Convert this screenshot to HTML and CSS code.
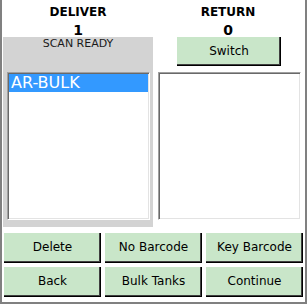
FILE: index.html
```html
<!DOCTYPE html>
<html lang="en">
<head>
    <meta charset="UTF-8">
    <title>Deliver / Return</title>
    <link rel="stylesheet" href="styles.css">
</head>
<body>
    <div class="window">
        <div class="top">
            <div class="column">
                <div class="head">
                    <div class="label">DELIVER</div>
                    <div class="count">1</div>
                </div>
                <div class="panel">
                    <div class="status">SCAN READY</div>
                    <ul class="listbox">
                        <li class="selected">AR-BULK</li>
                    </ul>
                </div>
            </div>
            <div class="column right">
                <div class="head">
                    <div class="label">RETURN</div>
                    <div class="count">0</div>
                </div>
                <button class="btn switch">Switch</button>
                <ul class="listbox"></ul>
            </div>
        </div>
        <div class="actions">
            <button class="btn">Delete</button>
            <button class="btn">No Barcode</button>
            <button class="btn">Key Barcode</button>
            <button class="btn">Back</button>
            <button class="btn">Bulk Tanks</button>
            <button class="btn">Continue</button>
        </div>
    </div>
</body>
</html>
```

FILE: styles.css
```css
body {
    margin: 0;
    background: #ffffff;
    font-family: 'DejaVu Sans', sans-serif;
    color: #000000;
}

.window {
    box-sizing: border-box;
    width: 307px;
    height: 304px;
    border-left: 2px solid #808080;
    border-right: 2px solid #808080;
    border-bottom: 2px solid #808080;
    padding: 0 2px 0 1px;
    background: #ffffff;
}

.top {
    display: grid;
    grid-template-columns: 150px 150px;
}

.head {
    height: 37px;
    box-sizing: border-box;
    padding-top: 4px;
    text-align: center;
    font-weight: bold;
}

.head .label {
    font-size: 12px;
    line-height: 16px;
}

.head .count {
    font-size: 14px;
    line-height: 16px;
    margin-top: 2px;
}

.panel {
    height: 190px;
    box-sizing: border-box;
    background: #d3d3d3;
    padding: 0 4px;
}

.status {
    font-size: 11px;
    line-height: 13px;
    text-align: center;
    color: #1a1a1a;
    margin-bottom: 22px;
}

.listbox {
    list-style: none;
    margin: 0;
    padding: 0;
    width: 143px;
    height: 148px;
    box-sizing: border-box;
    background: #ffffff;
    border-top: 1px solid #a0a0a0;
    border-left: 1px solid #a0a0a0;
    border-right: 1px solid #ffffff;
    border-bottom: 1px solid #ffffff;
    box-shadow: inset 1px 1px 0 #696969, inset -1px -1px 0 #e3e3e3;
    padding: 1px;
}

.listbox li {
    font-size: 16px;
    line-height: 18px;
    padding-left: 2px;
}

.listbox li.selected {
    background: #3399ff;
    color: #ffffff;
}

.right {
    display: flex;
    flex-direction: column;
}

.right .listbox {
    margin: 6px 0 0 5px;
}

.btn {
    font-family: 'DejaVu Sans', sans-serif;
    font-size: 11px;
    color: #000000;
    background: #c9e6c9;
    border: none;
    border-radius: 0;
    box-shadow: inset -1px -1px 0 #000000, inset -2px -2px 0 #404040;
    padding: 0 0 2px 0;
    cursor: pointer;
}

.switch {
    width: 104px;
    height: 29px;
    margin-left: 24px;
    font-size: 12px;
}

.actions {
    display: grid;
    grid-template-columns: 1fr 1fr 1fr;
    grid-template-rows: 30px 30px;
    gap: 4px;
    margin-top: 6px;
    padding: 0 0 0 1px;
}

.actions .btn {
    font-size: 12px;
}
```
